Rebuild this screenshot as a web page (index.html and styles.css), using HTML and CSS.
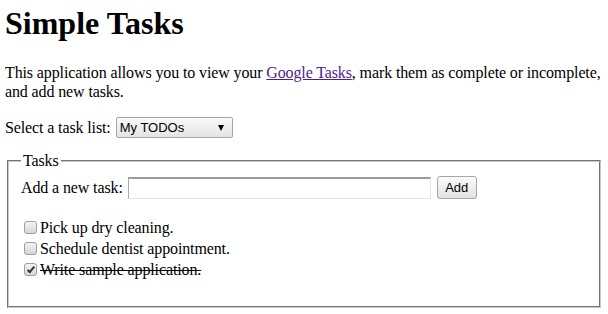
FILE: index.html
```html
<!DOCTYPE html>
<html lang="en">
<head>
    <meta charset="UTF-8">
    <meta name="viewport" content="width=device-width, initial-scale=1.0">
    <title>Simple Tasks</title>
    <link rel="stylesheet" href="styles.css">
</head>
<body>

    <h1>Simple Tasks</h1>
    <p>This application allows you to view your <a href="#">Google Tasks</a>, mark them as complete or incomplete, and add new tasks.</p>

    <div class="list-picker">
        <label for="task_list">Select a task list:</label>
        <span class="select-wrap">
            <select id="task_list">
                <option>My TODOs</option>
            </select>
        </span>
    </div>

    <fieldset class="tasks">
        <legend>Tasks</legend>
        <div class="new-task">
            <label for="new_task">Add a new task:</label>
            <input type="text" id="new_task">
            <button>Add</button>
        </div>
        <div class="task-list">
            <div class="task"><input type="checkbox" id="t1"><label for="t1">Pick up dry cleaning.</label></div>
            <div class="task"><input type="checkbox" id="t2"><label for="t2">Schedule dentist appointment.</label></div>
            <div class="task done"><input type="checkbox" id="t3" checked><label for="t3">Write sample application.</label></div>
        </div>
    </fieldset>

</body>
</html>
```

FILE: styles.css
```css
body {
    font-family: "Liberation Serif", "Times New Roman", serif;
    font-size: 16px;
    color: #000;
    background-color: #fff;
    margin: 5px;
    letter-spacing: -0.12px;
}
h1 {
    font-size: 32px;
    margin: 0 0 21px;
    letter-spacing: 0;
}
p {
    margin: 0 0 16px;
    line-height: 19px;
}
a {
    color: #551a8b;
}
.list-picker {
    display: flex;
    align-items: center;
    margin-bottom: 14px;
}
.select-wrap {
    position: relative;
    margin-left: 5px;
}
.select-wrap::after {
    content: "";
    position: absolute;
    right: 9px;
    top: 8px;
    border-left: 3px solid transparent;
    border-right: 3px solid transparent;
    border-top: 6px solid #000;
    pointer-events: none;
}
select {
    appearance: none;
    font-family: Arial, "Liberation Sans", sans-serif;
    font-size: 13px;
    letter-spacing: 0;
    width: 117px;
    height: 21px;
    padding: 0 0 0 3px;
    border: 1px solid #a6a6a6;
    border-radius: 2px;
    background: linear-gradient(#fafafa, #e4e4e4);
    color: #000;
    display: block;
}
.tasks {
    margin: 0 2px;
    border: 2px groove #c8c8c8;
    padding: 0 12px 26px;
}
.tasks legend {
    padding: 0 2px;
}
.new-task {
    display: flex;
    align-items: center;
    margin: 6px 0 18px;
}
.new-task input {
    box-sizing: border-box;
    width: 303px;
    height: 22px;
    margin: 0 6px 0 5px;
    border-top: 2px solid #9c9c9c;
    border-left: 1px solid #a9a9a9;
    border-right: 1px solid #e6e6e6;
    border-bottom: 1px solid #e6e6e6;
}
.new-task button {
    font-family: Arial, "Liberation Sans", sans-serif;
    font-size: 13px;
    letter-spacing: 0;
    height: 23px;
    width: 40px;
    padding: 0;
    border: 1px solid #a6a6a6;
    border-radius: 3px;
    background: linear-gradient(#fbfbfb, #e2e2e2);
    color: #000;
}
.task {
    line-height: 21px;
}
.task input {
    appearance: none;
    box-sizing: border-box;
    width: 13px;
    height: 13px;
    margin: 0 3px 0 3px;
    vertical-align: -1px;
    border: 1px solid #a0a0a0;
    border-radius: 3px;
    background: linear-gradient(#f4f4f4, #d6d6d6);
    position: relative;
}
.task input:checked::after {
    content: "";
    position: absolute;
    left: 4px;
    top: 1px;
    width: 2px;
    height: 6px;
    border-right: 2px solid #333;
    border-bottom: 2px solid #333;
    transform: rotate(40deg);
}
.done label {
    text-decoration: line-through;
}
```
